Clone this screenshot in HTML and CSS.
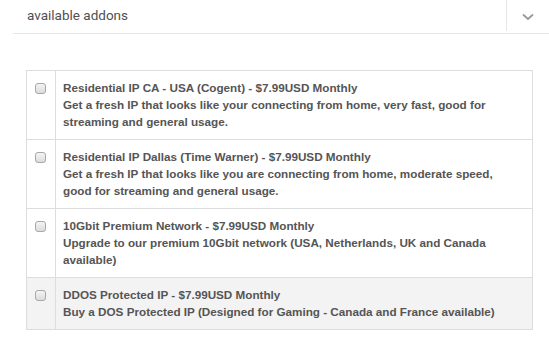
FILE: index.html
```html
<!DOCTYPE html>
<html lang="en">
<head>
    <meta charset="UTF-8">
    <meta name="viewport" content="width=device-width, initial-scale=1.0">
    <title>Available addons</title>
    <link rel="stylesheet" href="styles.css">
</head>
<body>
    <div class="panel">
        <div class="panel-heading">
            <span class="panel-title">available addons</span>
            <span class="panel-toggle">
                <svg width="12" height="8" viewBox="0 0 12 8">
                    <path d="M1 1.5 L6 6 L11 1.5" fill="none" stroke="#9a9a9a" stroke-width="1.8"/>
                </svg>
            </span>
        </div>

        <table class="addons">
            <tr>
                <td class="check"><input type="checkbox"></td>
                <td>
                    Residential IP CA - USA (Cogent) - $7.99USD Monthly<br>
                    Get a fresh IP that looks like your connecting from home, very fast, good for streaming and general usage.
                </td>
            </tr>
            <tr>
                <td class="check"><input type="checkbox"></td>
                <td>
                    Residential IP Dallas (Time Warner) - $7.99USD Monthly<br>
                    Get a fresh IP that looks like you are connecting from home, moderate speed, good for streaming and general usage.
                </td>
            </tr>
            <tr>
                <td class="check"><input type="checkbox"></td>
                <td>
                    10Gbit Premium Network - $7.99USD Monthly<br>
                    Upgrade to our premium 10Gbit network (USA, Netherlands, UK and Canada available)
                </td>
            </tr>
            <tr class="active">
                <td class="check"><input type="checkbox"></td>
                <td>
                    DDOS Protected IP - $7.99USD Monthly<br>
                    Buy a DOS Protected IP (Designed for Gaming - Canada and France available)
                </td>
            </tr>
        </table>
    </div>
</body>
</html>
```

FILE: styles.css
```css
body, html {
    margin: 0;
    padding: 0;
    background: #fff;
}

.panel {
    margin-left: 13px;
}

.panel-heading {
    display: flex;
    align-items: stretch;
    height: 33px;
    border-bottom: 1px solid #e6e6e6;
}

.panel-title {
    flex: 1;
    padding: 7px 0 0 14px;
    font-family: Roboto, "Liberation Sans", sans-serif;
    font-size: 13.5px;
    color: #505050;
}

.panel-toggle {
    width: 42px;
    height: 29px;
    border-left: 1px solid #e6e6e6;
    display: flex;
    align-items: center;
    justify-content: center;
    padding-top: 2px;
}

.addons {
    margin: 36px 0 0 13px;
    width: 507px;
    border-collapse: collapse;
    font-family: "Liberation Sans", Arial, sans-serif;
    font-size: 11.7px;
    font-weight: bold;
    line-height: 17px;
    color: #555;
}

.addons td {
    border: 1px solid #ddd;
    padding: 8px 8px 9px 7px;
    vertical-align: top;
}

.addons td.check {
    width: 13px;
    padding: 0 7px 0 8px;
}

.addons input {
    appearance: none;
    -webkit-appearance: none;
    display: block;
    margin: 12px 0 0 0;
    width: 11px;
    height: 11px;
    border: 1px solid #a8a8a8;
    border-radius: 3px;
    background: linear-gradient(#f4f4f4, #dcdcdc);
}

.addons tr.active td {
    background: #f3f3f3;
}
```
